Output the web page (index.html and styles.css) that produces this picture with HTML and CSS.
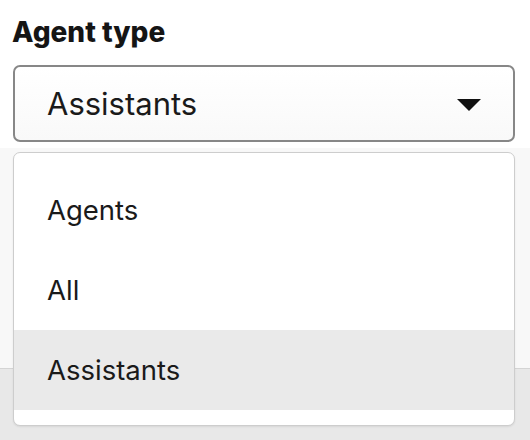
FILE: index.html
```html
<!DOCTYPE html>
<html>
<head>
<meta charset="utf-8">
<link rel="stylesheet" href="styles.css">
</head>
<body>
<div class="page">
  <div class="field">
    <div class="label">Agent type</div>
    <div class="select">
      <span class="value">Assistants</span>
      <svg class="caret" width="24" height="12" viewBox="0 0 24 12"><path d="M0 0H24L12 12Z" fill="#111"/></svg>
    </div>
  </div>
  <div class="backdrop"></div>
  <ul class="menu">
    <li class="item">Agents</li>
    <li class="item">All</li>
    <li class="item selected">Assistants</li>
  </ul>
</div>
</body>
</html>
```
FILE: styles.css
```css
html, body {
  margin: 0;
  padding: 0;
}
body {
  background: #e8e8e8;
  font-family: "Inter", "Lato", sans-serif;
  color: #1a1a1a;
}
.page {
  position: relative;
  width: 530px;
  height: 440px;
  overflow: hidden;
}
.field {
  background: #fff;
  padding: 16px 15px 6px 13px;
}
.label {
  font-weight: 800;
  font-size: 28px;
  line-height: 32px;
  margin-left: -1px;
  margin-bottom: 17px;
  color: #151515;
}
.select {
  height: 73px;
  border: 2px solid #878787;
  border-radius: 7px;
  background: linear-gradient(#ffffff, #f9f9f9);
  display: flex;
  align-items: center;
  justify-content: space-between;
  padding: 0 32px 0 32px;
}
.value {
  font-size: 31px;
  color: #1a1a1a;
}
.caret {
  display: block;
  margin-top: 2px;
}
.backdrop {
  height: 220px;
  background: #f8f8f8;
  border-bottom: 1px solid #d4d4d4;
}
.menu {
  position: absolute;
  top: 152px;
  left: 13px;
  width: 500px;
  margin: 0;
  padding: 17px 0 15px;
  list-style: none;
  background: #fff;
  border: 1px solid #cdcdcd;
  border-radius: 7px;
  box-shadow: 0 1px 2px rgba(0,0,0,0.08);
}
.item {
  height: 80px;
  display: flex;
  align-items: center;
  padding-left: 33px;
  font-size: 27.5px;
  color: #1a1a1a;
}
.item.selected {
  background: #eaeaea;
}
```
